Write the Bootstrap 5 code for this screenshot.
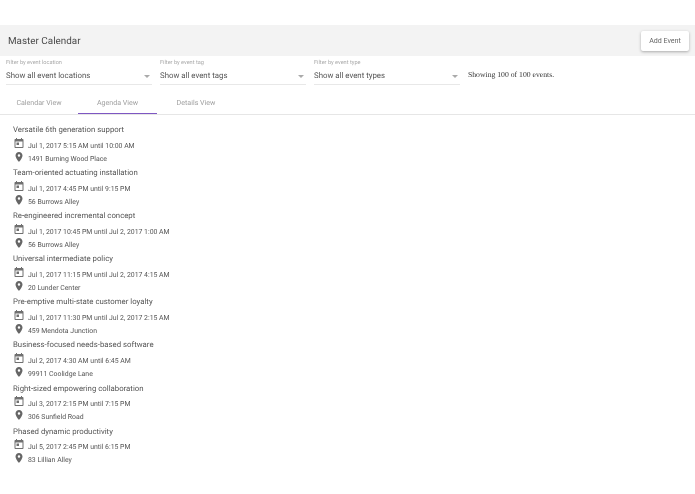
<!DOCTYPE html>
<html lang="en"><head><meta charset="utf-8"><title>Master Calendar</title>
<link href="https://cdn.jsdelivr.net/npm/bootstrap@5.3.0/dist/css/bootstrap.min.css" rel="stylesheet">
<style>
html,body{height:494px;overflow:hidden}
body{font-family:Roboto,"Liberation Sans",sans-serif;color:#444;background:#fff;text-rendering:geometricPrecision}
.pagewrap{filter:blur(.3px)}
.topband{margin-top:25px;height:31px;background:#f3f3f3;padding:0 6px 0 8px}
.topband h1{font-size:9.9px;font-weight:400;margin:2px 0 0;color:#4a4a4a}
.addbtn{width:48px;height:20px;padding:1px 0 0;font-size:7.1px;background:#fff;color:#666;border:0;border-radius:2px;box-shadow:0 1px 3px rgba(0,0,0,.3)}
.filters{height:36px;padding:4px 0 0 6px;gap:8px}
.pick{width:146px;height:25px;border-bottom:1px solid #e8e8e8}
.pick label{display:block;font-size:5.6px;line-height:7px;color:#aaa;margin:0}
.pick span{font-size:7.85px;line-height:18px;color:#555}
.caret{width:0;height:0;border:3px solid transparent;border-top-color:#aaa;border-bottom:0;margin:1px 2px 0 0}
.tally{font-family:"Liberation Serif",serif;font-size:7.7px;color:#333;padding-left:0;line-height:19px;margin-top:5px}
.tabrow{height:23px;border-bottom:1px solid #e6e6e6}
.tabitem{height:22px;font-size:7.1px;color:#a0a0a0;text-align:center;line-height:21px}
.tabitem.t1{width:78px}
.tabitem.t2{width:79px;box-shadow:inset 0 -1px 0 #7e57c2}
.tabitem.t3{width:78px}
.agenda{padding:8px 0 0 13px}
.evt{height:43.1px}
.evt h2{font-size:7.8px;font-weight:400;line-height:13px;margin:0;color:#555}
.line{font-size:6.9px;line-height:13px;color:#555;gap:4.5px;height:13px}
.line svg{width:10px;height:10px;flex:none;fill:#666;margin-left:.5px}
.line.first svg{margin-top:-7px;fill:#707070}
.line.second svg{margin-top:-5px}
.evt .first{margin-top:3.500px}
</style></head><body>
<div class="pagewrap">
<div class="topband d-flex align-items-center justify-content-between">
<h1>Master Calendar</h1><button class="addbtn" type="button">Add Event</button></div>
<div class="filters d-flex">
<div class="pick"><label>Filter by event location</label><div class="d-flex align-items-center justify-content-between"><span>Show all event locations</span><i class="caret"></i></div></div>
<div class="pick"><label>Filter by event tag</label><div class="d-flex align-items-center justify-content-between"><span>Show all event tags</span><i class="caret"></i></div></div>
<div class="pick"><label>Filter by event type</label><div class="d-flex align-items-center justify-content-between"><span>Show all event types</span><i class="caret"></i></div></div>
<div class="tally">Showing 100 of 100 events.</div>
</div>
<div class="tabrow d-flex"><div class="tabitem t1">Calendar View</div><div class="tabitem t2">Agenda View</div><div class="tabitem t3">Details View</div></div>
<div class="agenda" id="ag"></div>
</div>
<script src="https://cdn.jsdelivr.net/npm/bootstrap@5.3.0/dist/js/bootstrap.bundle.min.js"></script>
<script>
var cal='<svg viewBox="0 0 20 20"><path d="M17 2h-1V0h-2v2H6V0H4v2H3C1.900 2 1 2.900 1 4v14c0 1.100.9 2 2 2h14c1.100 0 2-.9 2-2V4c0-1.100-.9-2-2-2zm0 16H3V7h14v11zM5 9h5v5H5z"/></svg>';
var pin='<svg viewBox="0 0 20 20"><path d="M10 0C6.100 0 3 3.100 3 7c0 5.200 7 13 7 13s7-7.800 7-13c0-3.900-3.100-7-7-7zm0 9.500a2.500 2.500 0 1 1 0-5 2.500 2.500 0 0 1 0 5z"/></svg>';
var d=[["Versatile 6th generation support","Jul 1, 2017 5:15 AM until 10:00 AM","1491 Burning Wood Place"],
["Team-oriented actuating installation","Jul 1, 2017 4:45 PM until 9:15 PM","56 Burrows Alley"],
["Re-engineered incremental concept","Jul 1, 2017 10:45 PM until Jul 2, 2017 1:00 AM","56 Burrows Alley"],
["Universal intermediate policy","Jul 1, 2017 11:15 PM until Jul 2, 2017 4:15 AM","20 Lunder Center"],
["Pre-emptive multi-state customer loyalty","Jul 1, 2017 11:30 PM until Jul 2, 2017 2:15 AM","459 Mendota Junction"],
["Business-focused needs-based software","Jul 2, 2017 4:30 AM until 6:45 AM","99911 Coolidge Lane"],
["Right-sized empowering collaboration","Jul 3, 2017 2:15 PM until 7:15 PM","306 Sunfield Road"],
["Phased dynamic productivity","Jul 5, 2017 2:45 PM until 6:15 PM","83 Lillian Alley"]];
document.getElementById('ag').innerHTML=d.map(function(e){return '<div class="evt"><h2>'+e[0]+'</h2><div class="line first d-flex align-items-center">'+cal+'<span>'+e[1]+'</span></div><div class="line second d-flex align-items-center">'+pin+'<span>'+e[2]+'</span></div></div>'}).join('');
</script>
</body></html>
